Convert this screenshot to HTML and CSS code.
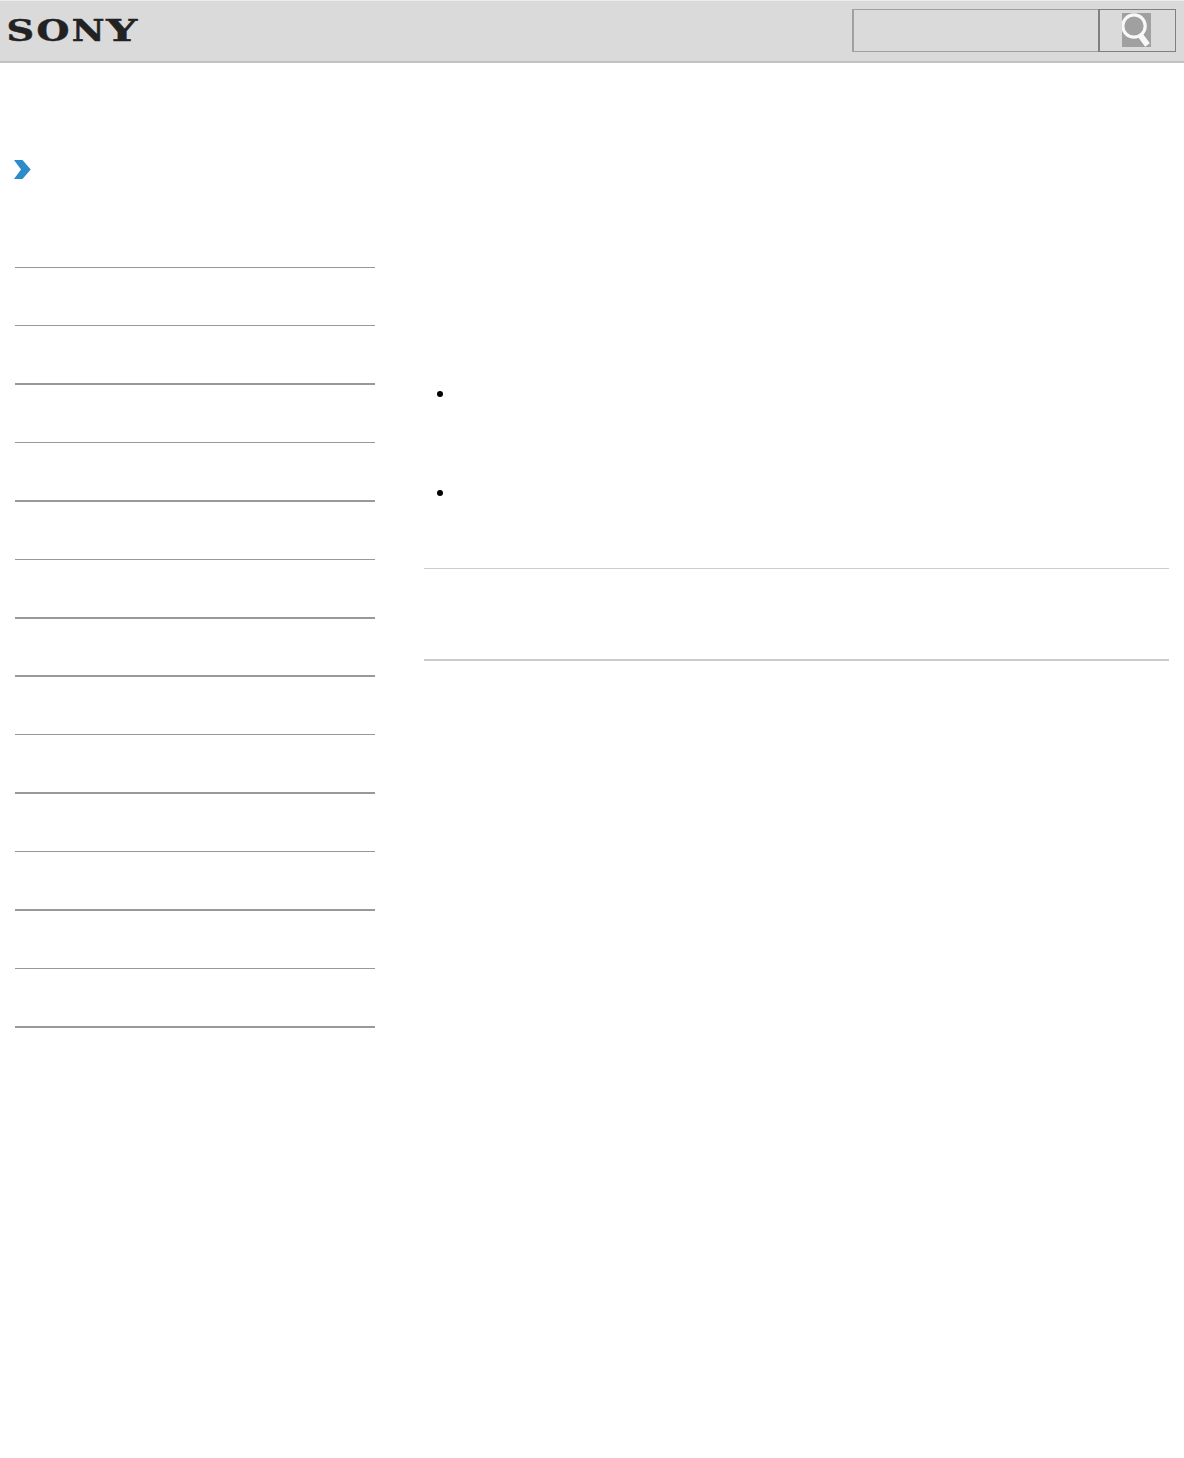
FILE: index.html
```html
<!DOCTYPE html>
<html lang="en">
<head>
    <meta charset="UTF-8">
    <meta name="viewport" content="width=device-width, initial-scale=1.0">
    <title>Sony</title>
    <link rel="stylesheet" href="styles.css">
</head>
<body>
    <header class="header">
        <svg class="logo" width="140" height="40" viewBox="0 0 140 40">
            <text y="32" transform="scale(1.28 1)"><tspan x="5" textLength="21.6" lengthAdjust="spacingAndGlyphs">S</tspan><tspan x="28.5">O</tspan><tspan x="56" textLength="25.6" lengthAdjust="spacingAndGlyphs">N</tspan><tspan x="83" textLength="24.2" lengthAdjust="spacingAndGlyphs">Y</tspan></text>
        </svg>
        <form class="search">
            <input class="search-input" type="text">
            <button class="search-button" type="button">
                <svg class="search-icon" width="29" height="34" viewBox="0 0 29 34">
                    <rect width="29" height="34" fill="#a0a0a0"/>
                    <circle cx="12" cy="13" r="11.2" fill="none" stroke="#f8f8f8" stroke-width="3.2"/>
                    <path d="M18.5 22.5L25.5 32" fill="none" stroke="#f8f8f8" stroke-width="5.8"/>
                </svg>
            </button>
        </form>
    </header>
    <div class="breadcrumb">
        <svg class="arrow" width="18" height="20" viewBox="0 0 18 20">
            <path d="M0 0H8.5L16.7 9.5L8.5 19H0L7 9.5Z" fill="#2d8bc9"/>
        </svg>
    </div>
    <div class="container">
        <ul class="side-menu">
            <li></li>
            <li></li>
            <li class="thick tall"></li>
            <li></li>
            <li class="thick tall"></li>
            <li></li>
            <li class="thick"></li>
            <li class="thick tall"></li>
            <li></li>
            <li class="thick tall"></li>
            <li></li>
            <li class="thick tall"></li>
            <li></li>
            <li class="thick"></li>
        </ul>
        <main class="content">
            <ul class="notes">
                <li></li>
                <li></li>
            </ul>
            <div class="related"></div>
        </main>
    </div>
</body>
</html>
```

FILE: styles.css
```css
* {
    box-sizing: border-box;
}

body {
    margin: 0;
    background: #fff;
    font-family: "Liberation Sans", Arial, sans-serif;
}

ul {
    margin: 0;
    padding: 0;
    list-style: none;
}

.header {
    display: flex;
    justify-content: space-between;
    align-items: flex-start;
    height: 63px;
    padding: 8px 8px 0 0;
    background: #dadada;
    border-top: 1px solid #ededed;
    border-bottom: 2px solid #c2c2c2;
}

.logo {
    display: block;
}

.logo text {
    font-family: "DejaVu Serif", serif;
    font-size: 29.5px;
    font-weight: bold;
    fill: #222;
    stroke: #222;
    stroke-width: 0.5px;
}

.search {
    display: flex;
    width: 324px;
    height: 43px;
}

.search-input {
    width: 246px;
    padding: 0 8px;
    background: transparent;
    border: 1px solid #a0a0a0;
    border-left-width: 2px;
    border-right: 0;
    border-radius: 0;
    outline: none;
}

.search-button {
    display: flex;
    width: 78px;
    padding: 3px 0 0 22px;
    background: transparent;
    border: 1px solid #808080;
    border-left-width: 2px;
    cursor: pointer;
}

.search-icon {
    display: block;
}

.breadcrumb {
    height: 204px;
    padding: 97px 14px 0;
}

.arrow {
    display: block;
}

.container {
    display: flex;
    gap: 49px;
    padding: 0 15px;
}

.side-menu {
    width: 360px;
}

.side-menu li {
    height: 58px;
    border-top: 1px solid #999;
}

.side-menu .thick {
    border-top-width: 2px;
}

.side-menu .tall {
    height: 59px;
}

.content {
    flex: 1;
    padding-top: 124px;
}

.notes {
    height: 177px;
    padding-left: 13px;
}

.notes li {
    height: 99px;
}

.notes li::before {
    content: "";
    display: block;
    width: 6px;
    height: 6px;
    background: #000;
    border-radius: 50%;
}

.related {
    height: 93px;
    border-top: 1px solid #ccc;
    border-bottom: 2px solid #ccc;
}
```
